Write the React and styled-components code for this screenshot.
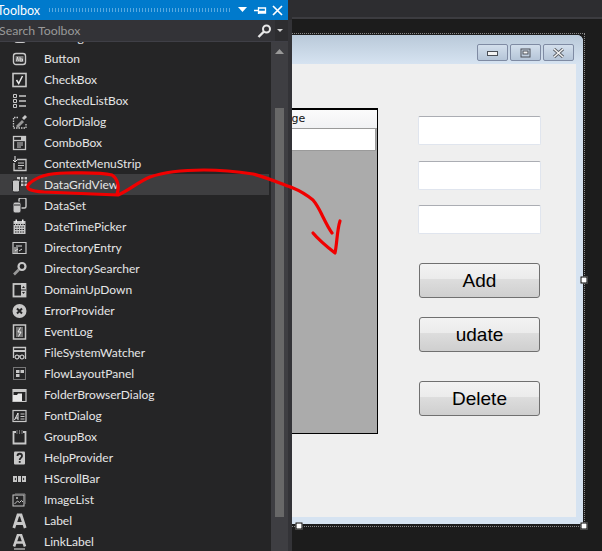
import React from 'react';
import styled, { createGlobalStyle } from 'styled-components';

const GlobalStyle = createGlobalStyle`
  html, body {
    margin: 0;
    padding: 0;
    background: #1c1c1c;
  }
`;

const tools = [
  ['BindingSource', 'source'],
  ['Button', 'button'],
  ['CheckBox', 'check'],
  ['CheckedListBox', 'checklist'],
  ['ColorDialog', 'color'],
  ['ComboBox', 'combo'],
  ['ContextMenuStrip', 'context'],
  ['DataGridView', 'grid'],
  ['DataSet', 'dataset'],
  ['DateTimePicker', 'date'],
  ['DirectoryEntry', 'entry'],
  ['DirectorySearcher', 'searcher'],
  ['DomainUpDown', 'updown'],
  ['ErrorProvider', 'error'],
  ['EventLog', 'log'],
  ['FileSystemWatcher', 'watcher'],
  ['FlowLayoutPanel', 'flow'],
  ['FolderBrowserDialog', 'folder'],
  ['FontDialog', 'font'],
  ['GroupBox', 'group'],
  ['HelpProvider', 'help'],
  ['HScrollBar', 'hscroll'],
  ['ImageList', 'image'],
  ['Label', 'label'],
  ['LinkLabel', 'link'],
];

const c = '#c8c8c8';
const d = '#252526';

const glyphs = {
  source: <rect x="2" y="3" width="12" height="10" rx="3" fill={c} />,
  button: (
    <>
      <rect x="1.5" y="2.5" width="12" height="11" rx="2.5" fill="none" stroke={c} strokeWidth="1.4" />
      <rect x="3.5" y="5" width="8" height="6" fill="#777" />
      <path d="M4.5 10l1-4 1 4M8 6v4h2.5V8H8" fill="none" stroke="#eee" strokeWidth=".8" />
    </>
  ),
  check: (
    <>
      <rect x="1" y="1.5" width="13" height="13" fill="none" stroke={c} strokeWidth="1.6" />
      <path d="M4.5 8l2.2 3.5L10.5 4" fill="none" stroke="#e8e8e8" strokeWidth="1.5" />
    </>
  ),
  checklist: (
    <>
      <path d="M1.5 1.5h3v3h-3zM1.5 6.5h3v3h-3zM1.5 11.5h3v3h-3z" fill="none" stroke={c} />
      <path d="M7 3h7M7 8h7M7 13h7" stroke={c} strokeWidth="1.6" />
    </>
  ),
  color: (
    <>
      <path d="M6 3.500H1.500v10.500h12.500V10" fill="none" stroke={c} strokeDasharray="1.500 1" strokeWidth="1.300" />
      <path d="M4 12l6-6 2 2-6 6z" fill="#999" />
      <path d="M10 4l3-3 2 2-3 3z" fill={c} />
    </>
  ),
  combo: (
    <>
      <rect x="1.5" y="1.5" width="12" height="13" fill="none" stroke={c} strokeWidth="1.3" />
      <path d="M1.5 5.5h12" stroke={c} strokeWidth="1.3" />
      <rect x="9" y="2" width="4" height="3" fill={c} />
      <path d="M5 8h6M5 10h6M5 12h4" stroke={c} />
    </>
  ),
  context: (
    <>
      <path d="M5 3.500H14V14.500H2V7" fill="none" stroke={c} strokeWidth="1.300" />
      <path d="M6 7h6M6 9.500h6M6 12h4" stroke={c} />
      <path d="M3 0v6L1 4M3 6l2-2" fill="none" stroke="#eee" />
    </>
  ),
  grid: (
    <>
      <rect x="5" y="0" width="10" height="9" fill={c} />
      <path d="M5 3h10M5 6h10M8.500 0v9M12 0v9" stroke={d} />
      <rect x="0.500" y="3" width="7" height="12" rx="1.500" fill={c} stroke={d} />
    </>
  ),
  dataset: (
    <>
      <rect x="7" y="0" width="7" height="10" rx="1.500" fill="none" stroke={c} strokeWidth="1.400" />
      <rect x="1" y="4" width="8" height="11" rx="2" fill={c} stroke={d} />
      <path d="M2 7h6" stroke={d} />
    </>
  ),
  date: (
    <>
      <rect x="1.500" y="2" width="12" height="13" fill={c} />
      <rect x="3.500" y="0.500" width="1.500" height="3" fill="#eee" />
      <rect x="10" y="0.500" width="1.500" height="3" fill="#eee" />
      <path d="M1.500 5.500h12M3 8h9M3 10.500h9M3 13h9" stroke={d} strokeDasharray="1.500 1" />
    </>
  ),
  entry: (
    <>
      <path d="M1 2.500h13v11H1z" fill="none" stroke={c} strokeWidth="1.200" />
      <path d="M1 7h5v6H1z" fill="#888" />
      <path d="M4 6h6M7 11l3-2M3 11l3-2" stroke="#ddd" />
    </>
  ),
  searcher: (
    <>
      <circle cx="10" cy="5.500" r="3.500" fill="none" stroke={c} strokeWidth="2.200" />
      <path d="M7 8.500l-5 5" stroke="#999" strokeWidth="2.600" />
    </>
  ),
  updown: (
    <>
      <rect x="1.500" y="2" width="12" height="12.500" fill="none" stroke={c} strokeWidth="1.800" />
      <rect x="9" y="1" width="5" height="14" fill={c} />
      <path d="M10 6l1.500-2 1.500 2zM10 10l1.500 2 1.500-2z" fill={d} />
      <path d="M9 8h5" stroke={d} />
    </>
  ),
  error: (
    <>
      <circle cx="7.500" cy="8" r="7" fill={c} />
      <path d="M5 5.500l5 5M10 5.500l-5 5" stroke={d} strokeWidth="2" />
    </>
  ),
  log: (
    <>
      <rect x="1.500" y="1" width="12" height="14" fill="none" stroke={c} strokeWidth="1.500" />
      <rect x="4" y="3" width="7" height="10" fill="#777" />
      <path d="M8.500 3.500L6 8h3l-2.500 4.500" fill="none" stroke="#eee" />
    </>
  ),
  watcher: (
    <>
      <path d="M1.500 13V2.500h12V14" fill="none" stroke={c} strokeWidth="1.300" />
      <path d="M1.500 6h12" stroke={c} strokeWidth="2" />
      <circle cx="5" cy="12" r="2" fill="none" stroke="#eee" />
      <circle cx="10" cy="12" r="2" fill="none" stroke="#eee" />
      <path d="M7 11h1" stroke="#eee" />
    </>
  ),
  flow: (
    <>
      <rect x="1.500" y="1.500" width="12" height="12" fill="none" stroke={c} strokeDasharray="1 1" />
      <rect x="4" y="4" width="3.500" height="3" fill={c} />
      <rect x="8.500" y="4" width="3.500" height="3" fill={c} />
      <rect x="4" y="8" width="3.500" height="3" fill={c} />
    </>
  ),
  folder: (
    <>
      <path d="M1 2.500h13v12h-13z" fill="none" stroke={c} strokeWidth="1.200" />
      <path d="M1 2.500h13V5H1z" fill={c} />
      <path d="M1 8h4l1-1.500h4V14H1z" fill="#e8e8e8" />
    </>
  ),
  font: (
    <>
      <rect x="1" y="2.500" width="13" height="11" fill="none" stroke={c} strokeWidth="1.200" />
      <path d="M2.500 12l3.500-7v7M3.500 10h2.500" fill="none" stroke="#eee" />
      <path d="M8.500 6h4M8.500 8.500h4M8.500 11h4" stroke={c} />
    </>
  ),
  group: (
    <>
      <path d="M4 3H1.500v11.500h12V3H11" fill="none" stroke={c} strokeWidth="1.800" />
      <path d="M5 1.500v3M7.500 1.500v3M10 1.500v3" stroke={c} strokeDasharray="1 1" />
    </>
  ),
  help: (
    <>
      <rect x="2" y="1.500" width="11" height="13" rx="1" fill={c} />
      <path d="M5.500 6c0-3 4.500-3 4.500 0 0 2-2.300 1.800-2.300 4" fill="none" stroke={d} strokeWidth="1.800" />
      <rect x="6.800" y="11" width="1.800" height="1.800" fill={d} />
    </>
  ),
  hscroll: (
    <>
      <rect x="1" y="5" width="4" height="6" fill={c} />
      <rect x="6" y="5" width="3" height="6" fill={c} />
      <rect x="10" y="5" width="4" height="6" fill={c} />
      <path d="M4 6.500L2.500 8 4 9.500zM11 6.500L12.500 8 11 9.500z" fill={d} />
    </>
  ),
  image: (
    <>
      <rect x="1" y="3" width="11" height="11" fill="none" stroke={c} />
      <path d="M3 2h10v10" fill="none" stroke="#888" />
      <path d="M2.500 12l3-3 2 1.500 2-2 1.500 1.500" fill="none" stroke={c} />
      <circle cx="5" cy="6" r="1" fill={c} />
    </>
  ),
  label: <path d="M1.800 15L6 2h3l4.200 13M3.800 10.500h7.400" fill="none" stroke={c} strokeWidth="2.800" />,
  link: (
    <>
      <path d="M2 12.500L6 1h3l4 11.500M3.800 8.500h7.400" fill="none" stroke={c} strokeWidth="2.600" />
      <path d="M2 15h11" stroke={c} strokeWidth="1.200" />
    </>
  ),
};

const ToolIcon = ({ name }) => (
  <IconSvg viewBox="0 0 16 16">{glyphs[name]}</IconSvg>
);

const App = () => {
  return (
    <>
      <GlobalStyle />
      <Screen>
        <TabBand />
        <Canvas>
          <SelectionFrame>
            <FormWindow>
              <FormTitle>
                <CaptionButton>
                  <svg width="12" height="8" viewBox="0 0 12 8">
                    <rect x=".5" y="2.500" width="10" height="4" fill="#f4f4f4" stroke="#4a4f57" />
                  </svg>
                </CaptionButton>
                <CaptionButton>
                  <svg width="12" height="10" viewBox="0 0 12 10">
                    <rect x="1" y="1" width="9" height="8" fill="none" stroke="#4a4f57" />
                    <rect x="3" y="3" width="5" height="3" fill="#f4f4f4" stroke="#4a4f57" />
                  </svg>
                </CaptionButton>
                <CaptionButton>
                  <svg width="13" height="10" viewBox="0 0 13 10">
                    <path d="M2 1l9 8M11 1l-9 8" stroke="#5a5f66" strokeWidth="3.200" />
                    <path d="M2 1l9 8M11 1l-9 8" stroke="#f4f4f4" strokeWidth="1.400" />
                  </svg>
                </CaptionButton>
              </FormTitle>
              <ClientArea>
                <DataGrid>
                  <GridHeader>
                    <HeaderCell $width={147}>Name</HeaderCell>
                    <HeaderCell>Age</HeaderCell>
                  </GridHeader>
                  <GridRow />
                </DataGrid>
                <FieldColumn>
                  <TextBox $gap={0} />
                  <TextBox $gap={16} />
                  <TextBox $gap={15} />
                  <FormButton $gap={29}>Add</FormButton>
                  <FormButton $gap={19}>udate</FormButton>
                  <FormButton $gap={29}>Delete</FormButton>
                </FieldColumn>
              </ClientArea>
            </FormWindow>
            <Handle $x="50%" $y="100%" />
            <Handle $x="100%" $y="100%" />
            <Handle $x="100%" $y="50%" />
          </SelectionFrame>
        </Canvas>

        <Toolbox>
          <TitleBar>
            <TitleText>Toolbox</TitleText>
            <Grip />
            <TitleIcons>
              <svg width="12" height="6" viewBox="0 0 12 6">
                <path d="M1 0h9L5.500 5z" fill="#fff" />
              </svg>
              <svg width="13" height="11" viewBox="0 0 13 11">
                <path d="M0 5.500h4M4.500 2v7M4.500 3h7v5h-7M5 6.500h6" fill="none" stroke="#fff" strokeWidth="1.300" />
              </svg>
              <svg width="11" height="11" viewBox="0 0 11 11">
                <path d="M1 1l9 9M10 1l-9 9" stroke="#fff" strokeWidth="1.700" />
              </svg>
            </TitleIcons>
          </TitleBar>
          <SearchRow>
            <SearchField>
              <SearchText>Search Toolbox</SearchText>
              <svg width="15" height="14" viewBox="0 0 15 14">
                <circle cx="9.500" cy="5" r="3.500" fill="none" stroke="#e8e8e8" strokeWidth="2" />
                <path d="M7 7.500L1.500 13" stroke="#e8e8e8" strokeWidth="2.400" />
              </svg>
            </SearchField>
            <svg width="6" height="3" viewBox="0 0 6 3">
              <path d="M0 0h6L3 3z" fill="#d0d0d0" />
            </svg>
          </SearchRow>
          <ListArea>
            <ToolList>
              {tools.map(([label, icon]) => (
                <ToolRow key={label} $active={label === 'DataGridView'}>
                  <ToolIcon name={icon} />
                  <ToolName>{label}</ToolName>
                </ToolRow>
              ))}
            </ToolList>
            <ScrollTrack>
              <svg width="9" height="5" viewBox="0 0 9 5">
                <path d="M0 5L4.500 0 9 5z" fill="#999" />
              </svg>
              <ScrollThumb />
            </ScrollTrack>
          </ListArea>
        </Toolbox>

        <Scribble viewBox="0 0 602 551">
          <path
            d="M117 194C120 186 117 178 112 175C100 172 82 173 66 173C50 173 36 177 29 184C25 189 30 191 44 192C66 193 90 194 118 195C128 191 138 182 150 177C164 172 184 170 204 170C226 170 240 172 253 174C268 178 282 184 293 188C303 192 308 196 313 200C318 206 320 211 323 217C326 223 329 229 332 233"
            fill="none"
            stroke="#f00000"
            strokeWidth="3.200"
            strokeLinecap="round"
            strokeLinejoin="round"
          />
          <path
            d="M313 233C318 239 326 246 335 253C337 244 337 230 340 221"
            fill="none"
            stroke="#f00000"
            strokeWidth="3.200"
            strokeLinecap="round"
            strokeLinejoin="round"
          />
        </Scribble>
      </Screen>
    </>
  );
};

export default App;

const Screen = styled.div`
  position: relative;
  width: 602px;
  height: 551px;
  overflow: hidden;
  background: #1c1c1c;
`;

const TabBand = styled.div`
  height: 17px;
  background: #2d2d30;
  border-bottom: 2px solid #3c3c40;
`;

const Canvas = styled.div`
  padding: 14px 17px 0 12px;
`;

const SelectionFrame = styled.div`
  position: relative;
  display: flex;
  height: 494px;
  padding: 1px 1px 2px 1px;
  box-sizing: border-box;
  border: 1px dotted #8a8a8a;
`;

const FormWindow = styled.div`
  flex: 1;
  display: flex;
  flex-direction: column;
  background: #d6e3f1;
  border-top-right-radius: 6px;
  padding: 0 7px 7px;
`;

const FormTitle = styled.div`
  display: flex;
  justify-content: flex-end;
  gap: 2px;
  height: 29px;
  margin: 0 -7px;
  padding: 9px 9px 0 0;
  box-sizing: border-box;
  border-top-right-radius: 6px;
  background: linear-gradient(#b9c9d9, #d6e3f1);
`;

const CaptionButton = styled.div`
  display: flex;
  align-items: center;
  justify-content: center;
  width: 31px;
  height: 17px;
  box-sizing: border-box;
  border: 1px solid #7f8ba3;
  border-radius: 2px;
  background: linear-gradient(#d3dfec, #b5c5d8);
`;

const ClientArea = styled.div`
  flex: 1;
  display: flex;
  padding: 44px 0 0 109px;
  background: #efefef;
`;

const DataGrid = styled.div`
  width: 248px;
  height: 326px;
  box-sizing: border-box;
  border: 1px solid #000;
  border-top-width: 2px;
  background: #ababab;
`;

const GridHeader = styled.div`
  display: flex;
  height: 18px;
  border-bottom: 1px solid #9a9a9a;
  background: linear-gradient(#fbfbfb, #f1f2f4);
`;

const HeaderCell = styled.div`
  width: ${(p) => (p.$width ? `${p.$width}px` : 'auto')};
  padding-left: 3px;
  font: 11px/17px "DejaVu Sans", sans-serif;
  color: #111;
`;

const GridRow = styled.div`
  height: 21px;
  margin-right: 1px;
  border: 1px solid #9a9a9a;
  border-top: none;
  background: #fff;
`;

const FieldColumn = styled.div`
  display: flex;
  flex-direction: column;
  width: 123px;
  margin: 8px 0 0 40px;
`;

const TextBox = styled.div`
  height: 29px;
  margin-top: ${(p) => p.$gap}px;
  box-sizing: border-box;
  border: 1px solid #e0e5ee;
  border-top-color: #abadb3;
  border-radius: 2px;
  background: #fff;
`;

const FormButton = styled.div`
  display: flex;
  align-items: center;
  justify-content: center;
  width: 121px;
  height: 35px;
  margin: ${(p) => p.$gap}px 0 0 1px;
  box-sizing: border-box;
  border: 1px solid #707070;
  border-radius: 3px;
  background: linear-gradient(#f3f3f3 0%, #ebebeb 45%, #dddddd 46%, #cfcfcf 100%);
  font: 19px "Liberation Sans", Arial, sans-serif;
  color: #000;
`;

const Handle = styled.div`
  position: absolute;
  left: ${(p) => p.$x};
  top: ${(p) => p.$y};
  width: 7px;
  height: 7px;
  transform: translate(-50%, -50%);
  box-sizing: border-box;
  border: 1px solid #000;
  background: #fff;
`;

const Toolbox = styled.div`
  position: absolute;
  left: 0;
  top: 0;
  bottom: 0;
  display: flex;
  flex-direction: column;
  width: 292px;
  box-sizing: border-box;
  padding-right: 4px;
  background: linear-gradient(#2d2d30 20px, #333337 20px);
`;

const TitleBar = styled.div`
  display: flex;
  align-items: center;
  flex: none;
  height: 20px;
  background: #007acc;
`;

const TitleText = styled.div`
  margin-left: -3px;
  width: 51px;
  font: 12.5px Lato, sans-serif;
  color: #fff;
`;

const Grip = styled.div`
  flex: 1;
  height: 4px;
  background-image: radial-gradient(circle, #59a9e0 0.7px, transparent 0.9px);
  background-size: 3px 2px;
`;

const TitleIcons = styled.div`
  display: flex;
  align-items: center;
  gap: 5px;
  padding: 0 5px 0 6px;
`;

const SearchRow = styled.div`
  display: flex;
  align-items: center;
  flex: none;
  height: 21px;
  padding-right: 5px;
  gap: 2px;
  border-bottom: 1px solid #3f3f46;
  background: #2d2d30;
`;

const SearchField = styled.div`
  flex: 1;
  display: flex;
  align-items: center;
  justify-content: space-between;
  height: 100%;
  padding-right: 3px;
  background: #333337;
`;

const SearchText = styled.div`
  margin-left: -1px;
  font: 12.3px Lato, sans-serif;
  color: #999;
`;

const ListArea = styled.div`
  flex: 1;
  display: flex;
  min-height: 0;
  overflow: hidden;
  background: #252526;
`;

const ToolList = styled.div`
  flex: 1;
  margin-top: -15px;
  padding-right: 2px;
`;

const ToolRow = styled.div`
  display: flex;
  align-items: center;
  height: 21px;
  padding-left: 12px;
  background: ${(p) => (p.$active ? '#3e3e40' : 'transparent')};
`;

const IconSvg = styled.svg`
  flex: none;
  width: 16px;
  height: 16px;
`;

const ToolName = styled.span`
  margin-left: 16px;
  font: 12px Lato, sans-serif;
  color: #e6e6e6;
  white-space: nowrap;
`;

const ScrollTrack = styled.div`
  display: flex;
  flex-direction: column;
  align-items: center;
  flex: none;
  width: 17px;
  padding-top: 7px;
  box-sizing: border-box;
  background: #3e3e42;
`;

const ScrollThumb = styled.div`
  width: 9px;
  height: 409px;
  margin-top: 54px;
  background: #686868;
`;

const Scribble = styled.svg`
  position: absolute;
  left: 0;
  top: 0;
  width: 602px;
  height: 551px;
  pointer-events: none;
`;
